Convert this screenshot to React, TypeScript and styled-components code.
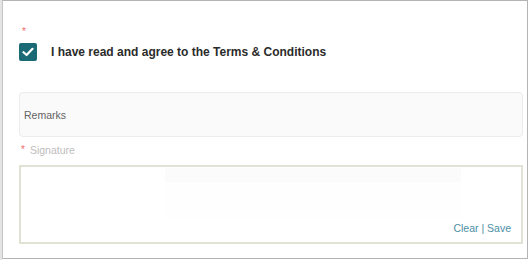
import styled, { createGlobalStyle } from 'styled-components'

const GlobalStyle = createGlobalStyle`
  html, body {
    margin: 0;
    padding: 0;
    background: #ffffff;
    font-family: Arial, "Liberation Sans", sans-serif;
  }
`

const Shell = styled.div`
  width: 528px;
  height: 260px;
  box-sizing: border-box;
  padding-left: 2px;
  background: linear-gradient(to right, #e4e4e4 0, #e4e4e4 2px, #ffffff 2px);
`

const Frame = styled.div`
  width: 526px;
  height: 259px;
  box-sizing: border-box;
  border: 1px solid #b4b4b4;
  border-left-color: #c4c4c4;
  background: #ffffff;
  padding: 0 4px 0 16px;
  display: flex;
  flex-direction: column;
`

const Required = styled.span`
  color: #f46a6a;
  font-size: 10px;
  line-height: 1;
`

const TopMark = styled.div`
  height: 10px;
  margin-top: 20px;
  padding-left: 3px;
`

const AgreeRow = styled.label`
  display: flex;
  align-items: center;
  gap: 14px;
  margin-top: 12px;
  height: 18px;
`

const Check = styled.span`
  width: 18px;
  height: 18px;
  border-radius: 2px;
  background: #196a74;
  display: flex;
  align-items: center;
  justify-content: center;
  flex-shrink: 0;
`

const AgreeText = styled.span`
  font-size: 12px;
  font-weight: bold;
  color: #2b2b2b;
`

const Remarks = styled.div`
  margin-top: 31px;
  height: 45px;
  box-sizing: border-box;
  border: 1px solid #ececec;
  border-radius: 4px;
  background: #fafafa;
  display: flex;
  align-items: center;
  padding-left: 4px;
  font-size: 10.5px;
  color: #626262;
`

const SigLabel = styled.div`
  margin: 4px 0 6px;
  height: 18px;
  display: flex;
  align-items: center;
  gap: 5px;
  padding-left: 2px;
  font-size: 10.5px;
  color: #bdbdbd;
`

const SigBox = styled.div`
  height: 79px;
  box-sizing: border-box;
  border: 2px solid #e2e2d4;
  display: flex;
  flex-direction: column;
  padding: 1px 10px 0 0;
`

const Canvas = styled.div`
  margin-left: 144px;
  width: 296px;
  height: 51px;
  background: linear-gradient(to bottom, #fbfbfb 0, #fbfbfb 14px, #fefefe 14px);
`

const Actions = styled.div`
  margin-top: auto;
  margin-bottom: 8px;
  align-self: flex-end;
  font-size: 10.5px;
  color: #4c8fa6;
`

export default function App() {
  return (
    <>
      <GlobalStyle />
      <Shell>
        <Frame>
          <TopMark>
            <Required>*</Required>
          </TopMark>
          <AgreeRow>
            <Check>
              <svg width="12" height="10" viewBox="0 0 12 10">
                <path d="M1.5 5.2 L4.6 8 L10.5 1.8" fill="none" stroke="#ffffff" strokeWidth="2.2" strokeLinecap="round" strokeLinejoin="round" />
              </svg>
            </Check>
            <AgreeText>I have read and agree to the Terms &amp; Conditions</AgreeText>
          </AgreeRow>
          <Remarks>Remarks</Remarks>
          <SigLabel>
            <Required>*</Required>
            Signature
          </SigLabel>
          <SigBox>
            <Canvas />
            <Actions>Clear | Save</Actions>
          </SigBox>
        </Frame>
      </Shell>
    </>
  )
}
